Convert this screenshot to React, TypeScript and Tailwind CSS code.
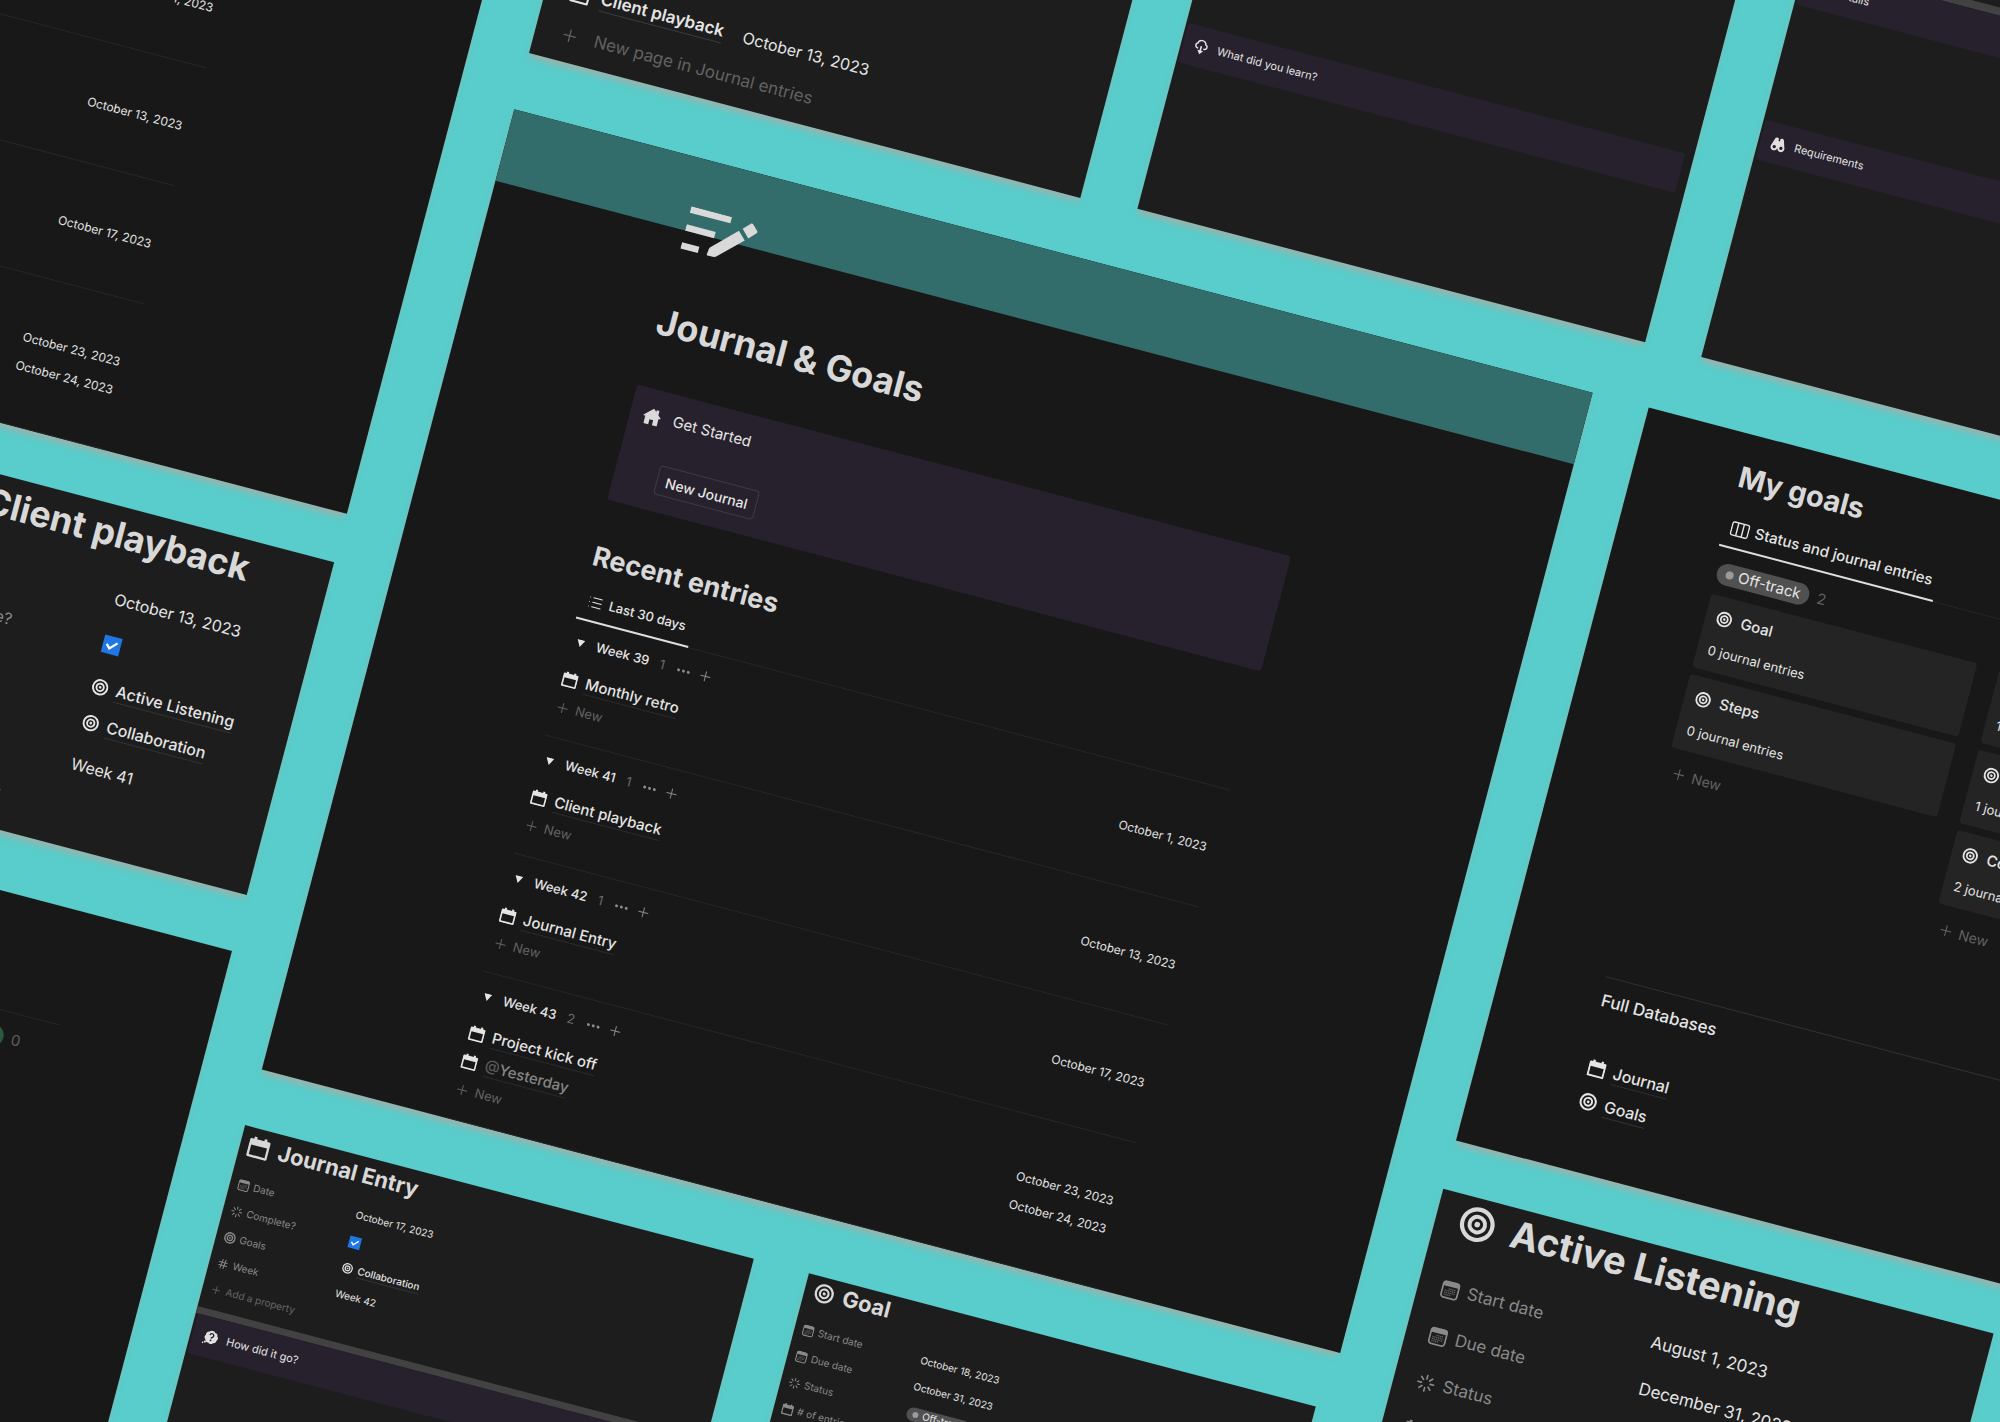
import type { ReactNode } from "react";
import clsx from "clsx";
import { Hash, List, Plus } from "lucide-react";

type IconName = "calendar" | "target" | "date" | "status" | "hash" | "plus";

const weeks = [
  { name: "Week 39", entries: [{ title: "Monthly retro", date: "October 1, 2023" }] },
  { name: "Week 41", entries: [{ title: "Client playback", date: "October 13, 2023" }] },
  { name: "Week 42", entries: [{ title: "Journal Entry", date: "October 17, 2023" }] },
  {
    name: "Week 43",
    entries: [
      { title: "Project kick off", date: "October 23, 2023" },
      { title: "@Yesterday", date: "October 24, 2023" },
    ],
  },
];

const goalColumns = [
  {
    status: "Off-track",
    pill: "bg-[#505050]",
    dot: "bg-[#9a9a9a]",
    cards: [
      { title: "Goal", count: 0 },
      { title: "Steps", count: 0 },
    ],
  },
  {
    status: "On-track",
    pill: "bg-[#28456c]",
    dot: "bg-[#447acb]",
    cards: [
      { title: "Active Listening", count: 1 },
      { title: "Presenting", count: 1 },
      { title: "Collaboration", count: 2 },
    ],
  },
  { status: "Achieved", pill: "bg-[#2b593f]", dot: "bg-[#45b076]", cards: [] },
];

function Icon({
  className,
  viewBox = "0 0 20 20",
  children,
}: {
  className?: string;
  viewBox?: string;
  children: ReactNode;
}) {
  return (
    <svg viewBox={viewBox} className={clsx("shrink-0", className)} fill="none" aria-hidden="true">
      {children}
    </svg>
  );
}

function CalendarIcon({ className }: { className?: string }) {
  return (
    <Icon className={className}>
      <path
        fill="currentColor"
        fillRule="evenodd"
        d="M4 .5h2.6v2h6.8v-2H16v2h2.2c.8 0 1.3.5 1.3 1.3v14.4c0 .8-.5 1.3-1.3 1.3H1.8c-.8 0-1.3-.5-1.3-1.3V3.8c0-.8.5-1.3 1.3-1.3H4v-2ZM2.6 8.300v9h14.800v-9H2.600Z"
      />
    </Icon>
  );
}

function DateIcon({ className }: { className?: string }) {
  return (
    <Icon className={className}>
      <rect x="1.5" y="1.5" width="17" height="17" rx="3" stroke="currentColor" strokeWidth="1.8" />
      <path d="M1.500 4a2.500 2.500 0 0 1 2.500-2.500h12a2.500 2.500 0 0 1 2.500 2.500v2.300h-17Z" fill="currentColor" />
      <path
        d="M8 8.800h8M4.200 11h11.600M4.200 13.200h11.600M4.200 15.400h8"
        stroke="currentColor"
        strokeWidth="1.300"
        strokeDasharray="1.300 .7"
        opacity=".7"
      />
    </Icon>
  );
}

function TargetIcon({ className }: { className?: string }) {
  return (
    <Icon viewBox="0 0 36 36" className={className}>
      <circle cx="18" cy="18" r="15.300" stroke="currentColor" strokeWidth="4.200" />
      <circle cx="18" cy="18" r="7.800" stroke="currentColor" strokeWidth="4" />
      <circle cx="18" cy="18" r="2.800" fill="currentColor" />
    </Icon>
  );
}

function StatusIcon({ className }: { className?: string }) {
  return (
    <Icon className={className}>
      <path
        d="M10 1.500v3.800M10 14.700v3.800M1.500 10h3.800M14.700 10h3.800M4 4l2.700 2.700M13.300 13.300 16 16M4 16l2.700-2.700M13.300 6.700 16 4"
        stroke="currentColor"
        strokeWidth="1.700"
        strokeLinecap="round"
      />
    </Icon>
  );
}

function ThoughtIcon({ className }: { className?: string }) {
  return (
    <Icon className={className}>
      <path
        fill="currentColor"
        d="M11 .5a4 4 0 0 1 3.600 1.600A4 4 0 0 1 18.500 6.200a4 4 0 0 1 .3 5.900 4 4 0 0 1-3.600 4A4.300 4.300 0 0 1 8.500 16.800 4 4 0 0 1 4 13.500a4.200 4.200 0 0 1-.8-6A4.200 4.200 0 0 1 7 2.300 4 4 0 0 1 11 .5Z"
      />
      <circle cx="4.200" cy="16.800" r="1.400" fill="currentColor" />
      <circle cx="1.500" cy="18.600" r="1.100" fill="currentColor" />
      <path d="M8.500 6.800a2.600 2.600 0 1 1 3.900 2.200c-.9.500-1.300.9-1.300 1.800" stroke="#26212c" strokeWidth="1.900" />
      <circle cx="11.100" cy="13.300" r="1.200" fill="#26212c" />
    </Icon>
  );
}

function CloudIcon({ className }: { className?: string }) {
  return (
    <Icon className={className}>
      <path
        d="M6.500 12H5.300a3.300 3.300 0 0 1-.8-6.300A5.500 5.500 0 0 1 15.300 5.200a3.500 3.500 0 0 1-.5 6.800h-1.300"
        stroke="currentColor"
        strokeWidth="2"
      />
      <path d="M8.900 8.500h2.200v6h2.900L10 19.800l-4-5.300h2.900Z" fill="currentColor" />
    </Icon>
  );
}

function BinocularsIcon({ className }: { className?: string }) {
  return (
    <Icon className={className}>
      <path
        fill="currentColor"
        fillRule="evenodd"
        d="M4.200 3c.5-1.700 4.300-1.700 4.800 0v3h2V3c.5-1.700 4.300-1.700 4.800 0l3 9.500a4.700 4.700 0 1 1-8.600 3.500h-.4a4.700 4.700 0 1 1-8.600-3.500L4.200 3Zm1.200 9.300a2.200 2.200 0 1 0 0 4.400 2.200 2.200 0 0 0 0-4.400Zm9.200 0a2.200 2.200 0 1 0 0 4.400 2.200 2.200 0 0 0 0-4.400Z"
      />
    </Icon>
  );
}

function HomeIcon({ className }: { className?: string }) {
  return (
    <Icon className={className}>
      <path
        fill="currentColor"
        d="M10 1.200 13 4V2h3v4.800l3 2.800c.4.400.3 1-.2 1h-1.600v7.200c0 .5-.3.800-.8.800H12v-5.400H8v5.400H3.600c-.5 0-.8-.3-.8-.8v-7.200H1.200c-.5 0-.7-.6-.2-1L10 1.200Z"
      />
    </Icon>
  );
}

function BoardIcon({ className }: { className?: string }) {
  return (
    <Icon className={className}>
      <rect x="1" y="3" width="18" height="14" rx="2" stroke="currentColor" strokeWidth="1.500" />
      <path d="M7 3v14M13 3v14" stroke="currentColor" strokeWidth="1.500" />
    </Icon>
  );
}

function EditNoteIcon() {
  return (
    <Icon viewBox="0 0 72 44" className="ml-[7px] h-[44px] w-[72px] text-[#d9d9d9]">
      <g fill="currentColor">
        <rect x="0" y="0" width="42" height="6.500" />
        <rect x="0" y="18.500" width="30" height="6.500" />
        <rect x="0" y="37" width="18" height="6.500" />
        <path d="M28 43.500c-.6 0-.9-.3-.9-.9l.6-5.600c.1-.9.4-1.600 1-2.300L52.200 11.400l8 8L36.800 42.200c-.7.600-1.400.900-2.300 1Z" />
        <path d="M55.300 8.600 62 1.600c.7-.7 1.600-.7 2.300 0l5.600 5.500c.7.700.7 1.600 0 2.300l-6.700 7.200Z" />
      </g>
    </Icon>
  );
}

function PropIcon({ name, className }: { name: IconName; className?: string }) {
  if (name === "calendar") return <CalendarIcon className={className} />;
  if (name === "target") return <TargetIcon className={className} />;
  if (name === "date") return <DateIcon className={className} />;
  if (name === "status") return <StatusIcon className={className} />;
  if (name === "hash") return <Hash className={clsx("shrink-0", className)} strokeWidth={2} />;
  return <Plus className={clsx("shrink-0", className)} strokeWidth={1.5} />;
}

function Panel({ className, children }: { className?: string; children?: ReactNode }) {
  return (
    <section className={clsx("shrink-0 overflow-hidden shadow-[0_6px_7px_-2px_rgba(200,160,150,0.65)]", className)}>
      {children}
    </section>
  );
}

function WeekGroup({ week }: { week: (typeof weeks)[number] }) {
  return (
    <li className="border-b border-[#272727] pt-[10px] pb-[15px]">
      <div className="flex h-[28px] items-center text-[13px] font-medium">
        <svg viewBox="0 0 10 10" className="mr-[12px] ml-[7px] h-[8px] w-[8px]" aria-hidden="true">
          <path d="M0 0.500h10L5 9.500Z" fill="currentColor" />
        </svg>
        {week.name}
        <span className="ml-[11px] font-normal text-[#6a6a6a]">{week.entries.length}</span>
        <button type="button" aria-label="Group options" className="ml-[10px] flex w-[18px] justify-center gap-[2px]">
          <span className="size-[3px] rounded-full bg-[#8a8a8a]" />
          <span className="size-[3px] rounded-full bg-[#8a8a8a]" />
          <span className="size-[3px] rounded-full bg-[#8a8a8a]" />
        </button>
        <button type="button" aria-label="Add entry" className="ml-[6px] text-[#8a8a8a]">
          <Plus className="size-[16px]" strokeWidth={1.5} />
        </button>
      </div>
      <ul className="mt-[9px]">
        {week.entries.map((entry) => (
          <li key={entry.title} className="flex h-[29px] items-center pr-[8px] pl-[2px]">
            <CalendarIcon className="mr-[8px] size-[16px]" />
            <a href="#" className="border-b border-[#2b2b2b] text-[15px] leading-[21px] font-medium">
              {entry.title.startsWith("@") ? (
                <span className="text-[#868686]">
                  <span className="text-[#5a5a5a]">@</span>
                  {entry.title.slice(1)}
                </span>
              ) : (
                entry.title
              )}
            </a>
            <span className="ml-auto text-[12px]">{entry.date}</span>
          </li>
        ))}
      </ul>
      <button type="button" className="flex h-[30px] items-center gap-[5px] pl-[2px] text-[13px] text-[#626262]">
        <Plus className="size-[16px]" strokeWidth={1.5} />
        New
      </button>
    </li>
  );
}

function JournalPage() {
  return (
    <Panel className="h-[993px] w-[1115px] bg-[#181818]">
      <div className="h-[74px] bg-[#336d6b]" />
      <div className="relative -mt-[25px] ml-[189px] w-[676px]">
        <EditNoteIcon />
        <h1 className="mt-[51px] ml-[3px] text-[36px] leading-[48px] font-bold text-[#d8d8d8]">Journal &amp; Goals</h1>
        <div className="mt-[43px] h-[119px] rounded-[3px] bg-[#26212c] pt-[12px] pl-[13px]">
          <p className="flex h-[30px] items-center gap-[12px] text-[15px]">
            <HomeIcon className="size-[19px] text-[#d9d9d9]" />
            Get Started
          </p>
          <button
            type="button"
            className="mt-[30px] ml-[30px] h-[30px] w-[103px] rounded-[4px] border border-[#3f3a45] text-[14px] font-medium"
          >
            New Journal
          </button>
        </div>
        <h2 className="mt-[40px] ml-[1px] text-[27px] leading-[36px] font-bold text-[#d8d8d8]">Recent entries</h2>
        <div className="mt-[9px] flex h-[38px] border-b border-[#272727]">
          <a
            href="#"
            className="flex h-[38px] items-center gap-[6px] border-b-2 border-[#dedede] pr-[8px] pl-[7px] text-[13px] font-medium"
          >
            <List className="size-[16px]" strokeWidth={1.5} />
            Last 30 days
          </a>
        </div>
        <ul className="-mt-px">
          {weeks.map((week) => (
            <WeekGroup key={week.name} week={week} />
          ))}
        </ul>
      </div>
    </Panel>
  );
}

function GoalsPage() {
  return (
    <Panel className="h-[758px] w-[1000px] bg-[#181818] pt-[26px] pr-[148px] pl-[103px]">
      <h2 className="ml-[2px] text-[29px] leading-[36px] font-bold text-[#d8d8d8]">My goals</h2>
      <div className="mt-[15px] flex h-[39px] border-b border-[#272727]">
        <a
          href="#"
          className="flex h-[39px] items-center gap-[6px] border-b-2 border-[#dedede] pr-[6px] pl-[7px] text-[15px] font-medium"
        >
          <BoardIcon className="size-[19px]" />
          Status and journal entries
        </a>
      </div>
      <div className="mt-[15px] flex gap-[23px] pl-[5px]">
        {goalColumns.map((column) => (
          <div key={column.status} className="w-[275px] shrink-0">
            <div className="flex h-[22px] items-center gap-[8px]">
              <StatusPill status={column.status} pill={column.pill} dot={column.dot} />
              <span className="text-[15px] text-[#5f5f5f]">{column.cards.length}</span>
            </div>
            <div className="mt-[11px] flex flex-col gap-[7px]">
              {column.cards.map((card) => (
                <a key={card.title} href="#" className="h-[76px] rounded-[4px] bg-[#242424] px-[11px] pt-[7px]">
                  <span className="flex h-[30px] items-center gap-[9px] text-[15px] font-medium">
                    <TargetIcon className="size-[16px]" />
                    {card.title}
                  </span>
                  <span className="mt-[4px] block text-[13px] leading-[28px]">{card.count} journal entries</span>
                </a>
              ))}
              <button type="button" className="flex h-[34px] items-center gap-[5px] pl-[6px] text-[14px] text-[#626262]">
                <Plus className="size-[17px]" strokeWidth={1.5} />
                New
              </button>
            </div>
          </div>
        ))}
      </div>
      <hr className="mt-[114px] border-[#333333]" />
      <h3 className="mt-[11px] ml-[2px] text-[17px] leading-[24px] font-medium">Full Databases</h3>
      <nav className="mt-[39px] ml-[6px] flex flex-col text-[16px] font-medium">
        <a href="#" className="flex h-[34px] items-center gap-[8px]">
          <CalendarIcon className="size-[18px]" />
          <span className="border-b border-[#333333] leading-[22px]">Journal</span>
        </a>
        <a href="#" className="flex h-[34px] items-center gap-[8px]">
          <TargetIcon className="size-[18px]" />
          <span className="border-b border-[#333333] leading-[22px]">Goals</span>
        </a>
      </nav>
    </Panel>
  );
}

function StatusPill({
  status,
  pill,
  dot,
  small,
}: {
  status: string;
  pill: string;
  dot: string;
  small?: boolean;
}) {
  return (
    <span
      className={clsx(
        "flex items-center rounded-full",
        pill,
        small ? "h-[14px] gap-[4px] px-[6px] text-[10px]" : "h-[22px] gap-[5px] px-[9px] text-[15px]",
      )}
    >
      <span className={clsx("rounded-full", dot, small ? "size-[6px]" : "size-[8px]")} />
      {status}
    </span>
  );
}

function Checked({ label, className }: { label: string; className: string }) {
  return (
    <span className="grid">
      <input
        type="checkbox"
        defaultChecked
        aria-label={label}
        className={clsx("col-start-1 row-start-1 appearance-none bg-[#1f77e4]", className)}
      />
      <svg viewBox="0 0 18 18" className={clsx("pointer-events-none col-start-1 row-start-1", className)} aria-hidden="true">
        <path d="m3.800 8.800 3.600 3.700 6.800-7" fill="none" stroke="#fff" strokeWidth="2.200" />
      </svg>
    </span>
  );
}

const rowSizes = {
  small: {
    row: "h-[27px] pl-[8px] text-[10px]",
    label: "w-[122px] gap-[4px]",
    icon: "size-[12px]",
  },
  medium: {
    row: "h-[46px] pl-[22px] text-[16px]",
    label: "w-[202px] gap-[8px]",
    icon: "size-[19px]",
  },
  large: {
    row: "h-[48px] pl-[23px] text-[17px]",
    label: "w-[217px] gap-[8px]",
    icon: "size-[19px]",
  },
};

function Row({
  icon,
  label,
  size,
  children,
}: {
  icon: IconName;
  label: string;
  size: keyof typeof rowSizes;
  children?: ReactNode;
}) {
  const s = rowSizes[size];
  return (
    <div className={clsx("flex items-center", s.row)}>
      <span className={clsx("flex shrink-0 items-center", s.label, icon === "plus" ? "text-[#686868]" : "text-[#8a8a8a]")}>
        <PropIcon name={icon} className={s.icon} />
        {label}
      </span>
      {children}
    </div>
  );
}

function GoalLink({ title, small }: { title: string; small?: boolean }) {
  return (
    <a href="#" className={clsx("flex items-center font-medium", small ? "gap-[5px]" : "h-[37px] gap-[8px]")}>
      <TargetIcon className={small ? "size-[11px]" : "size-[17px]"} />
      <span className={clsx("border-b border-[#333333]", small ? "leading-[14px]" : "leading-[22px]")}>{title}</span>
    </a>
  );
}

function SmallCallout({ icon, title }: { icon: ReactNode; title: string }) {
  return (
    <div className="mr-[9px] ml-[2px] flex h-[41px] shrink-0 items-center gap-[9px] rounded-[2px] bg-[#26212c] pl-[11px] text-[11px]">
      {icon}
      {title}
    </div>
  );
}

function ClientPlaybackPage() {
  return (
    <Panel className="h-[344px] w-[427px] bg-[#1d1d1d] pt-[3px]">
      <h2 className="flex h-[50px] items-center gap-[20px] pl-[21px] text-[36px] font-bold whitespace-nowrap text-[#d8d8d8]">
        <CalendarIcon className="size-[33px]" />
        Client playback
      </h2>
      <div className="mt-[15px]">
        <Row size="medium" icon="date" label="Date">
          October 13, 2023
        </Row>
        <Row size="medium" icon="status" label="Complete?">
          <Checked label="Complete?" className="size-[18px]" />
        </Row>
        <div className="flex h-[78px] items-center">
          <Row size="medium" icon="target" label="Goals">
            <span className="flex flex-col">
              <GoalLink title="Active Listening" />
              <GoalLink title="Collaboration" />
            </span>
          </Row>
        </div>
        <Row size="medium" icon="hash" label="Week">
          Week 41
        </Row>
        <Row size="medium" icon="plus" label="Add a property" />
      </div>
    </Panel>
  );
}

function JournalEntryPage() {
  return (
    <Panel className="-ml-[2px] h-[520px] w-[526px] bg-[#1d1d1d] pt-[3px]">
      <h2 className="flex h-[31px] items-center gap-[9px] pl-[8px] text-[22px] font-bold text-[#d8d8d8]">
        <CalendarIcon className="size-[22px]" />
        Journal Entry
      </h2>
      <div className="mt-[11px]">
        <Row size="small" icon="date" label="Date">
          October 17, 2023
        </Row>
        <Row size="small" icon="status" label="Complete?">
          <Checked label="Complete?" className="size-[12px]" />
        </Row>
        <Row size="small" icon="target" label="Goals">
          <GoalLink small title="Collaboration" />
        </Row>
        <Row size="small" icon="hash" label="Week">
          Week 42
        </Row>
        <Row size="small" icon="plus" label="Add a property" />
      </div>
      <div className="mt-[7px] h-[7px] bg-[#424242]" />
      <SmallCallout icon={<ThoughtIcon className="size-[15px] text-[#e0e0e0]" />} title="How did it go?" />
    </Panel>
  );
}

function GoalPage() {
  return (
    <Panel className="h-[520px] w-[524px] bg-[#1d1d1d]">
      <h2 className="flex h-[31px] items-center gap-[9px] pl-[10px] text-[22px] font-bold text-[#d8d8d8]">
        <TargetIcon className="size-[20px]" />
        Goal
      </h2>
      <div className="mt-[11px]">
        <Row size="small" icon="date" label="Start date">
          October 18, 2023
        </Row>
        <Row size="small" icon="date" label="Due date">
          October 31, 2023
        </Row>
        <Row size="small" icon="status" label="Status">
          <StatusPill small status="Off-track" pill="bg-[#505050]" dot="bg-[#9a9a9a]" />
        </Row>
        <Row size="small" icon="calendar" label="# of entries">
          0
        </Row>
      </div>
    </Panel>
  );
}

function ActiveListeningPage() {
  return (
    <Panel className="h-[420px] w-[569px] bg-[#1d1d1d]">
      <h2 className="flex h-[51px] items-center gap-[17px] pl-[24px] text-[38px] font-bold whitespace-nowrap text-[#d8d8d8]">
        <TargetIcon className="size-[36px]" />
        Active Listening
      </h2>
      <div className="mt-[21px]">
        <Row size="large" icon="date" label="Start date">
          August 1, 2023
        </Row>
        <Row size="large" icon="date" label="Due date">
          December 31, 2023
        </Row>
        <Row size="large" icon="status" label="Status">
          On-track
        </Row>
        <Row size="large" icon="calendar" label="# of entries">
          1
        </Row>
      </div>
    </Panel>
  );
}

function JournalEntriesPage() {
  return (
    <Panel className="flex h-[501px] w-[570px] flex-col justify-end bg-[#1d1d1d] pb-[6px] pl-[25px]">
      <div className="flex h-[43px] items-center">
        <CalendarIcon className="mr-[11px] size-[20px]" />
        <a href="#" className="border-b border-[#3a3a3a] text-[17px] leading-[24px] font-semibold">
          Client playback
        </a>
        <span className="ml-[20px] text-[16px]">October 13, 2023</span>
      </div>
      <button type="button" className="flex h-[43px] items-center gap-[15px] text-[17px] text-[#626262]">
        <Plus className="size-[20px]" strokeWidth={1.5} />
        New page in Journal entries
      </button>
    </Panel>
  );
}

export default function App() {
  return (
    <main className="h-screen overflow-hidden bg-[#58cdcb] font-['Inter','Liberation_Sans',sans-serif] text-[#e4e4e4]">
      <div className="-mt-[730px] -ml-[479px] flex w-max origin-top-left rotate-[14.73deg] items-start gap-[59px]">
        <div className="flex flex-col items-end">
          <JournalPage />
          <div className="mt-[50px] mb-[58px]">
            <ClientPlaybackPage />
          </div>
          <GoalsPage />
        </div>

        <div>
          <div className="flex h-[559px] items-start gap-[58px]">
            <JournalEntriesPage />
            <Panel className="flex h-[497px] w-[525px] flex-col justify-end bg-[#1d1d1d] pb-[152px]">
              <SmallCallout icon={<CloudIcon className="size-[15px]" />} title="What did you learn?" />
            </Panel>
            <Panel className="flex h-[497px] w-[525px] flex-col justify-end bg-[#1d1d1d] pb-[205px]">
              <div className="h-[8px] bg-[#424242]" />
              <SmallCallout icon={<TargetIcon className="size-[15px]" />} title="Details" />
              <div className="h-[119px]" />
              <SmallCallout icon={<BinocularsIcon className="size-[15px] text-[#e0e0e0]" />} title="Requirements" />
            </Panel>
          </div>

          <div className="flex items-start gap-[58px]">
            <div className="flex flex-col gap-[58px]">
              <JournalPage />
              <div className="flex gap-[57px]">
                <JournalEntryPage />
                <GoalPage />
              </div>
            </div>
            <div className="flex flex-col gap-[50px]">
              <GoalsPage />
              <ActiveListeningPage />
            </div>
          </div>
        </div>
      </div>
    </main>
  );
}
